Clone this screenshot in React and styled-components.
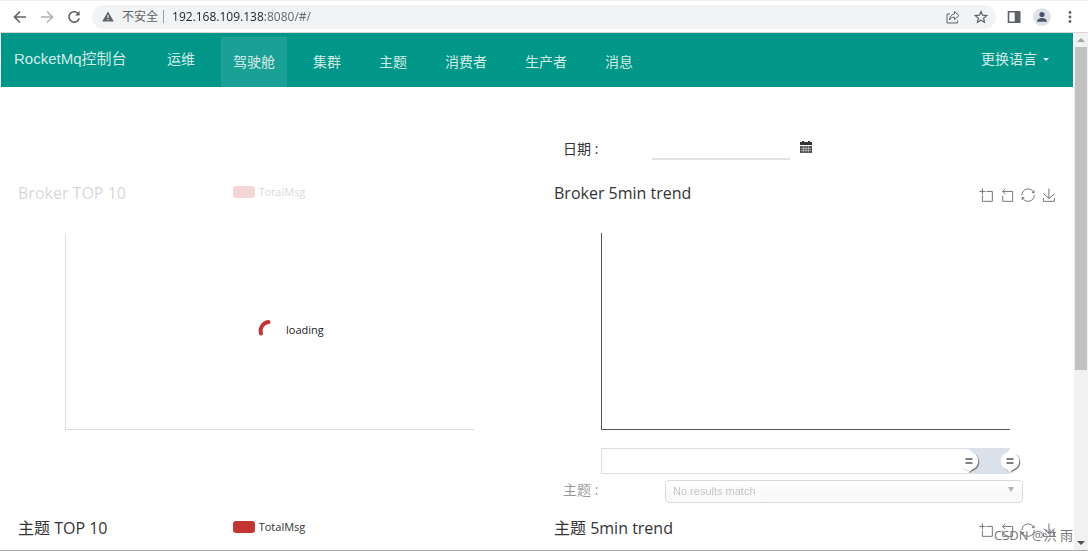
import { useState } from "react";
import styled, { createGlobalStyle } from "styled-components";

const tabs = ["驾驶舱", "集群", "主题", "消费者", "生产者", "消息"];

const tools = [
    {
        name: "区域缩放",
        d: "M0,13.5h26.9 M13.5,26.9V0 M32.1,13.5H58V58H13.5V32.1",
    },
    {
        name: "区域缩放还原",
        d: "M22,1.4L9.9,13.5l12.3,12.3 M10.3,13.5H54.9v44.6H10.3v-26",
    },
    {
        name: "还原",
        d: "M47,18.9h9.8V8.7 M56.3,20.1C52.1,9,40.5,0.6,26.8,2.1C12.6,3.7,1.6,16.2,2.1,30.6 M13,41.1H3.1v10.2 M3.7,39.9c4.2,11.1,15.8,19.5,29.5,18c14.2-1.6,25.2-14.1,24.7-28.5",
    },
    {
        name: "保存为图片",
        d: "M4.7,22.9L29.3,45.5L54.7,23.4 M4.6,43.6V58H53.8V43.6 M29.2,45.1V0",
    },
];

const BrowserBar = () => {
    const [url, setUrl] = useState("192.168.109.138:8080/#/");

    return (
        <BarWrap>
            <BarGroup>
                <BarButton aria-label="后退">
                    <svg width="14" height="14" viewBox="0 0 14 14">
                        <path d="M13 7H2M7 1.5L1.5 7L7 12.5" />
                    </svg>
                </BarButton>
                <BarButton aria-label="前进" disabled>
                    <svg width="14" height="14" viewBox="0 0 14 14">
                        <path d="M1 7h11M7 1.5L12.5 7L7 12.5" />
                    </svg>
                </BarButton>
                <BarButton aria-label="重新加载">
                    <svg width="14" height="14" viewBox="0 0 14 14">
                        <path d="M11.5 4A5.2 5.2 0 1 0 12.2 8.2" />
                        <path d="M12.6 1v4.6H8z" fill="#5f6368" stroke="none" />
                    </svg>
                </BarButton>
            </BarGroup>
            <Address>
                <svg width="12" height="11" viewBox="0 0 12 11">
                    <path d="M6 0.5L11.8 10.5H0.2z" fill="#5f6368" />
                    <path d="M6 4v3M6 8v1.2" stroke="#f1f3f4" strokeWidth="1.2" />
                </svg>
                <Unsafe>不安全</Unsafe>
                <UrlInput
                    aria-label="地址"
                    value={url}
                    onChange={(e) => setUrl(e.target.value)}
                />
                <BarButton aria-label="分享">
                    <svg width="14" height="14" viewBox="0 0 14 14">
                        <path
                            d="M4 4H1v9h10.5v-2.5M8.5 1.5L13 5.5L8.5 9.5V7.2C6 7.2 4.5 8 3.5 10C3.8 6.5 5.5 4.3 8.5 3.9z"
                            strokeWidth="1"
                        />
                    </svg>
                </BarButton>
                <BarButton aria-label="收藏">
                    <svg width="14" height="14" viewBox="0 0 14 14">
                        <path
                            d="M7 1.5L8.6 5.2L12.7 5.6L9.6 8.3L10.5 12.3L7 10.2L3.5 12.3L4.4 8.3L1.3 5.6L5.4 5.2z"
                            strokeWidth="1.2"
                        />
                    </svg>
                </BarButton>
            </Address>
            <BarButton aria-label="侧边栏">
                <svg width="14" height="14" viewBox="0 0 14 14">
                    <path d="M1.5 1.8h11v10.4h-11z" />
                    <path d="M8.5 1.8h4v10.4h-4z" fill="#5f6368" />
                </svg>
            </BarButton>
            <BarButton aria-label="用户">
                <svg width="18" height="18" viewBox="0 0 18 18">
                    <circle cx="9" cy="9" r="9" fill="#dfe2e9" stroke="none" />
                    <circle cx="9" cy="6.5" r="2.6" fill="#4b5468" stroke="none" />
                    <path d="M4 13.8c0-5 10-5 10 0z" fill="#4b5468" stroke="none" />
                </svg>
            </BarButton>
            <BarButton aria-label="菜单">
                <svg width="14" height="14" viewBox="0 0 14 14">
                    <g fill="#5f6368" stroke="none">
                        <circle cx="7" cy="2.5" r="1.4" />
                        <circle cx="7" cy="7" r="1.4" />
                        <circle cx="7" cy="11.5" r="1.4" />
                    </g>
                </svg>
            </BarButton>
        </BarWrap>
    );
};

const Navbar = () => {
    return (
        <NavWrap>
            <Brand href="#/">RocketMq控制台</Brand>
            <NavList>
                <li>
                    <NavLink href="#/ops">运维</NavLink>
                </li>
                {tabs.map((tab, i) => (
                    <li key={tab}>
                        <TabLink href={`#/${i}`} $active={i === 0}>
                            {tab}
                        </TabLink>
                    </li>
                ))}
            </NavList>
            <LangButton>
                更换语言
                <Caret />
            </LangButton>
        </NavWrap>
    );
};

const Toolbox = () => {
    return (
        <ToolboxWrap>
            {tools.map((tool) => (
                <ToolButton key={tool.name} aria-label={tool.name}>
                    <svg width="14" height="14" viewBox="-2 -2 63 63">
                        <path d={tool.d} />
                    </svg>
                </ToolButton>
            ))}
        </ToolboxWrap>
    );
};

const DataZoom = () => {
    const [start, setStart] = useState(90);
    const [end, setEnd] = useState(100);

    return (
        <ZoomTrack>
            <ZoomRange style={{ left: `${start}%`, right: `${100 - end}%` }} />
            <ZoomInput
                type="range"
                aria-label="开始"
                value={start}
                onChange={(e) => setStart(Math.min(+e.target.value, end))}
            />
            <ZoomInput
                type="range"
                aria-label="结束"
                value={end}
                onChange={(e) => setEnd(Math.max(+e.target.value, start))}
            />
        </ZoomTrack>
    );
};

const BarChart = ({ title, loading }) => {
    return (
        <Panel>
            <PanelHead>
                <PanelTitle>{title}</PanelTitle>
                <Legend>
                    <LegendMark />
                    TotalMsg
                </Legend>
            </PanelHead>
            <Plot />
            {loading && (
                <Loading>
                    <svg width="22" height="22" viewBox="0 0 22 22">
                        <path d="M3 14.5A9 9 0 0 1 10.5 3" />
                    </svg>
                    <span>loading</span>
                </Loading>
            )}
        </Panel>
    );
};

const TrendChart = ({ title }) => {
    return (
        <Panel>
            <PanelHead>
                <PanelTitle>{title}</PanelTitle>
                <Toolbox />
            </PanelHead>
            <Plot />
            <DataZoom />
        </Panel>
    );
};

const App = () => {
    return (
        <>
            <GlobalStyle />
            <Window>
                <BrowserBar />
                <Viewport>
                    <Page>
                        <Navbar />
                        <Columns>
                            <DateRow>
                                <RowLabel htmlFor="date">日期 :</RowLabel>
                                <DateInput id="date" type="text" />
                                <CalendarButton aria-label="选择日期">
                                    <svg width="12" height="12" viewBox="0 0 12 12">
                                        <path d="M0 1h2V0h2v1h4V0h2v1h2v3H0z" fill="#333" />
                                        <path d="M0 5h12v7H0z" fill="#555" />
                                        <path
                                            d="M1 7.5h10M1 9.5h10M3.5 5v6.5M6 5v6.5M8.5 5v6.5"
                                            stroke="#bbb"
                                            strokeWidth="0.7"
                                        />
                                    </svg>
                                </CalendarButton>
                            </DateRow>
                            <BarChart title="Broker TOP 10" loading />
                            <TrendChart title="Broker 5min trend" />
                            <TopicRow>
                                <RowLabel htmlFor="topic" $wide>
                                    主题 :
                                </RowLabel>
                                <SelectWrap>
                                    <Select id="topic" disabled>
                                        <option>No results match</option>
                                    </Select>
                                </SelectWrap>
                            </TopicRow>
                            <BarChart title="主题 TOP 10" />
                            <TrendChart title="主题 5min trend" />
                        </Columns>
                    </Page>
                    <Scrollbar>
                        <ScrollArrow $up />
                        <ScrollTrack>
                            <ScrollThumb />
                        </ScrollTrack>
                        <ScrollArrow />
                    </Scrollbar>
                </Viewport>
                <Watermark>CSDN @洪 雨</Watermark>
            </Window>
        </>
    );
};

export default App;

const GlobalStyle = createGlobalStyle`
    *{
        box-sizing: border-box;
    }
    body{
        margin: 0;
        font-family: "Open Sans", "Noto Sans CJK SC", sans-serif;
        color: #333;
        background-color: #fff;
    }
    button, input, select{
        margin: 0;
        padding: 0;
        border: 0;
        background: none;
        font: inherit;
        color: inherit;
    }
    a{
        color: inherit;
        text-decoration: none;
    }
    svg{
        display: block;
    }
`;
const Window = styled.div`
    position: relative;
    display: flex;
    flex-direction: column;
    height: 100vh;
    overflow: hidden;
    border-top: 1px solid #f1f1f1;
    border-bottom: 1px solid #aaa;
`;
const BarWrap = styled.div`
    display: flex;
    flex: none;
    align-items: center;
    height: 32px;
    padding: 0 8px 0 10px;
    border-bottom: 1px solid #ddd6d8;
    gap: 8px;
`;
const BarGroup = styled.div`
    display: flex;
    gap: 7px;
`;
const BarButton = styled.button`
    display: flex;
    align-items: center;
    justify-content: center;
    width: 20px;
    height: 20px;
    svg{
        fill: none;
        stroke: #5f6368;
        stroke-width: 1.6;
    }
    &:disabled{
        opacity: 0.5;
    }
`;
const Address = styled.div`
    display: flex;
    flex: 1;
    align-items: center;
    height: 24px;
    padding: 0 5px 0 10px;
    border-radius: 12px;
    background-color: #f1f3f4;
    gap: 8px;
`;
const Unsafe = styled.span`
    padding-right: 5px;
    border-right: 1px solid #9a9da1;
    font-size: 12px;
    line-height: 13px;
    color: #5f6368;
`;
/* host part is dark, the port and path are lighter */
const UrlInput = styled.input`
    flex: 1;
    min-width: 0;
    font-size: 12px;
    background: linear-gradient(90deg, #202124 93px, #5f6368 93px);
    background-clip: text;
    -webkit-background-clip: text;
    color: transparent;
    caret-color: #202124;
    outline: none;
`;
const Viewport = styled.div`
    display: flex;
    flex: 1;
    min-height: 0;
    padding-left: 1px;
`;
const Page = styled.div`
    flex: 1;
    min-width: 0;
    overflow: hidden;
`;
const NavWrap = styled.nav`
    display: flex;
    height: 54px;
    padding: 0 24px 0 13px;
    background-color: #009688;
    color: rgba(255, 255, 255, 0.84);
    font-family: "Liberation Sans", "Noto Sans CJK SC", sans-serif;
    font-size: 14px;
    line-height: 52px;
`;
const Brand = styled.a`
    width: 141px;
    font-size: 15px;
`;
const NavList = styled.ul`
    display: flex;
    flex: 1;
    margin: 0;
    padding: 0;
    list-style: none;
    gap: 14px;
`;
const NavLink = styled.a`
    display: block;
    padding: 0 12px;
`;
const TabLink = styled(NavLink)`
    height: 50px;
    margin-top: 4px;
    line-height: 50px;
    background-color: ${({ $active }) => ($active ? "rgba(255, 255, 255, 0.1)" : "transparent")};
`;
const LangButton = styled.button`
    display: flex;
    align-items: center;
    height: 52px;
    gap: 6px;
`;
const Caret = styled.span`
    border: 3px solid transparent;
    border-top-color: currentColor;
    border-bottom: 0;
`;
const Columns = styled.main`
    display: grid;
    grid-template-columns: 1fr 1fr;
`;
const DateRow = styled.div`
    display: flex;
    grid-column: 2;
    height: 90px;
    padding: 50px 0 0 26px;
`;
const TopicRow = styled.div`
    display: flex;
    grid-column: 2;
    height: 34px;
    padding: 0 50px 0 26px;
    opacity: 0.5;
`;
const RowLabel = styled.label`
    flex: none;
    width: ${({ $wide }) => ($wide ? "102px" : "89px")};
    font-size: 14px;
    line-height: 24px;
`;
const DateInput = styled.input`
    flex: 0 1 138px;
    min-width: 0;
    height: 23px;
    border-bottom: 2px solid #e2e2e2;
    outline: none;
`;
const CalendarButton = styled.button`
    height: 20px;
    padding: 0 10px;
`;
const SelectWrap = styled.div`
    position: relative;
    flex: 1;
    &::after{
        content: "";
        position: absolute;
        top: 9px;
        right: 9px;
        border: 3px solid transparent;
        border-top: 5px solid #666;
        border-bottom: 0;
        pointer-events: none;
    }
`;
const Select = styled.select`
    appearance: none;
    width: 100%;
    height: 23px;
    padding: 0 7px;
    border: 1px solid #b5b5b5;
    border-radius: 4px;
    background: linear-gradient(#fff 20%, #f9f9f9 50%, #f3f3f3 52%, #f8f8f8 100%);
    font-family: "Liberation Sans", sans-serif;
    font-size: 11px;
    color: #888;
    opacity: 1;
`;
const Panel = styled.section`
    position: relative;
    height: 301px;
`;
const PanelHead = styled.header`
    display: grid;
    grid-template-columns: 1fr auto 1fr;
    height: 32px;
    padding: 0 17px;
    line-height: 32px;
`;
const PanelTitle = styled.h2`
    margin: 0;
    font-size: 16px;
    font-weight: 400;
    white-space: nowrap;
`;
const Legend = styled.div`
    display: flex;
    align-items: center;
    height: 30px;
    font-size: 11px;
    line-height: 30px;
    gap: 4px;
`;
const LegendMark = styled.span`
    width: 22px;
    height: 12px;
    border-radius: 3px;
    background-color: #c23531;
`;
const ToolboxWrap = styled.div`
    display: flex;
    grid-column: 3;
    justify-content: flex-end;
    align-items: center;
    padding-top: 4px;
    gap: 7px;
`;
const ToolButton = styled.button`
    svg{
        fill: none;
        stroke: #666;
        stroke-width: 4;
    }
`;
const Plot = styled.div`
    height: 197px;
    margin: 24px 63px 0 64px;
    border-left: 1px solid #555;
    border-bottom: 1px solid #555;
`;
const ZoomTrack = styled.div`
    position: relative;
    height: 26px;
    margin: 18px 63px 0 64px;
    border: 1px solid #ddd;
`;
const ZoomRange = styled.div`
    position: absolute;
    top: -1px;
    bottom: -1px;
    background-color: #dbe1eb;
`;
/* both inputs share one track, only the thumbs take the pointer */
const ZoomInput = styled.input`
    appearance: none;
    position: absolute;
    top: -1px;
    left: -12px;
    width: calc(100% + 26px);
    height: 26px;
    pointer-events: none;
    &::-webkit-slider-thumb{
        appearance: none;
        width: 26px;
        height: 26px;
        pointer-events: auto;
        background: url("data:image/svg+xml,%3Csvg xmlns='http://www.w3.org/2000/svg' width='26' height='26' viewBox='0 0 26 26'%3E%3Cg fill='%23777' transform='translate(1.2 1)'%3E%3Ccircle cx='13' cy='13' r='9.2'/%3E%3Cpath d='M10 20h6l-3 4z'/%3E%3C/g%3E%3Cg fill='%23fff'%3E%3Ccircle cx='13' cy='13' r='9.3'/%3E%3Cpath d='M10 5l3-4l3 4zM10 21h6l-3 3.5z'/%3E%3C/g%3E%3Cpath d='M9.5 11h7M9.5 15h7' stroke='%23555' stroke-width='1.3'/%3E%3C/svg%3E") no-repeat;
    }
`;
const Loading = styled.div`
    position: absolute;
    inset: 0;
    display: grid;
    grid-template-columns: 1fr 22px 1fr;
    align-items: center;
    padding-top: 4px;
    background-color: rgba(255, 255, 255, 0.8);
    column-gap: 6px;
    font-size: 11px;
    color: #222;
    svg{
        grid-column: 2;
        fill: none;
        stroke: #c23531;
        stroke-width: 4;
        stroke-linecap: round;
    }
`;
const Scrollbar = styled.div`
    display: flex;
    flex-direction: column;
    width: 15px;
    border-left: 1px solid #fff;
    background-color: #f1f1f1;
`;
const ScrollArrow = styled.span`
    display: flex;
    align-items: center;
    justify-content: center;
    height: 14px;
    &::after{
        content: "";
        border: 4px solid transparent;
        ${({ $up }) => ($up ? "border-bottom-color: #a3a3a3; border-top: 0;" : "border-top-color: #505050; border-bottom: 0;")}
    }
`;
const ScrollTrack = styled.div`
    flex: 1;
    padding: 0 1px;
`;
const ScrollThumb = styled.div`
    height: 66%;
    background-color: #c1c1c1;
`;
const Watermark = styled.div`
    position: absolute;
    right: 15px;
    bottom: 6px;
    font-size: 13px;
    line-height: 18px;
    color: #777;
`;
